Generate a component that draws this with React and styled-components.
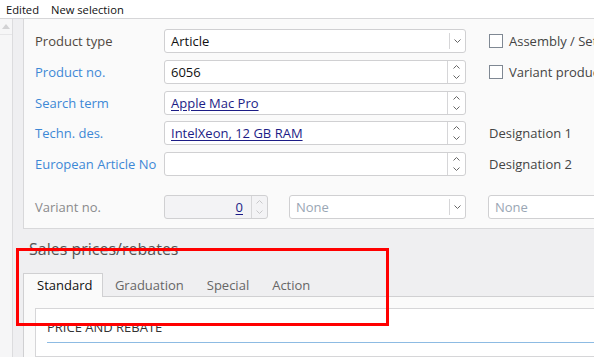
import React from "react";
import styled, { createGlobalStyle } from "styled-components";

const Global = createGlobalStyle`
  html, body { margin: 0; padding: 0; }
  body {
    width: 594px; height: 357px; overflow: hidden;
    font-family: "Open Sans", "Noto Sans", sans-serif;
    background: #efeff1;
  }
  #root { height: 357px; }
`;

const Page = styled.div`
  position: relative;
  width: 594px;
  height: 357px;
  overflow: hidden;
  display: flex;
  flex-direction: column;
`;

const TopBar = styled.div`
  height: 18px;
  background: #fff;
  border-bottom: 1px solid #d6d6d8;
  display: flex;
  align-items: center;
  gap: 12px;
  padding-left: 6px;
  font-size: 11.2px;
  color: #111;
  flex-shrink: 0;
`;

const Body = styled.div`
  flex: 1;
  display: flex;
  min-height: 0;
`;

const Strip = styled.div`
  width: 12px;
  flex-shrink: 0;
  background: #f6f6f7;
  border-right: 1px solid #dcdcde;
`;

const ScrollBtn = styled.div`
  height: 15px;
  border-bottom: 1px solid #e6e6e8;
  display: flex;
  justify-content: center;
  align-items: center;
`;

const Main = styled.div`
  flex: 1;
  padding-left: 10px;
  display: flex;
  flex-direction: column;
  min-width: 0;
`;

const Panel = styled.div`
  background: #fafafa;
  border-left: 1px solid #d8d8da;
  border-bottom: 1px solid #d8d8da;
  padding: 10px 0 9px 11px;
  display: flex;
  flex-direction: column;
  gap: 6.75px;
  width: 700px;
`;

const Row = styled.div`
  display: flex;
  align-items: center;
  height: 24px;
  margin-top: ${(p) => p.$mt || 0}px;
`;

const Label = styled.div`
  width: 129px;
  flex-shrink: 0;
  font-size: 13px;
  color: ${(p) =>
    p.$tone === "blue" ? "#3d88d6" : p.$tone === "muted" ? "#8a8a8c" : "#504840"};
`;

const Field = styled.div`
  width: ${(p) => p.$w}px;
  flex-shrink: 0;
  height: 24px;
  box-sizing: border-box;
  border: 1px solid #d0d0d2;
  border-radius: 3px;
  background: ${(p) => (p.$disabled ? "#f3f3f5" : "#fff")};
  display: flex;
  align-items: stretch;
  margin-left: ${(p) => p.$ml || 0}px;
`;

const Value = styled.div`
  flex: 1;
  display: flex;
  align-items: center;
  justify-content: ${(p) => (p.$right ? "flex-end" : "flex-start")};
  padding: 0 ${(p) => (p.$right ? 8 : 6)}px;
  font-size: 13px;
  color: ${(p) => (p.$placeholder ? "#9aa6b4" : p.$link ? "#1c1c86" : "#111")};
  text-decoration: ${(p) => (p.$link ? "underline" : "none")};
  text-underline-offset: 2px;
  white-space: nowrap;
  overflow: hidden;
`;

const Addon = styled.div`
  width: ${(p) => p.$w}px;
  border-left: 1px solid #d6d6d8;
  margin: ${(p) => (p.$inset ? "3px 0" : "0")};
  display: flex;
  flex-direction: column;
  justify-content: center;
  align-items: center;
  gap: 6px;
`;

const Side = styled.div`
  margin-left: 23px;
  display: flex;
  align-items: center;
  gap: 6px;
  font-size: 13px;
  color: #444;
  white-space: nowrap;
`;

const Check = styled.span`
  width: 14px;
  height: 14px;
  box-sizing: border-box;
  border: 1px solid #7f8893;
  background: #fff;
  display: inline-block;
`;

const Heading = styled.div`
  font-size: 16px;
  color: #555;
  padding: 9px 0 0 6px;
  height: 44px;
  flex-shrink: 0;
  box-sizing: border-box;
  line-height: 22px;
`;

const Tabs = styled.div`
  display: flex;
  height: 24px;
  flex-shrink: 0;
`;

const Tab = styled.div`
  height: 24px;
  box-sizing: border-box;
  display: flex;
  align-items: center;
  padding: 0 ${(p) => (p.$active ? 10 : 10.5)}px 0 ${(p) => (p.$active ? 13 : 10.5)}px;
  font-size: 13px;
  color: ${(p) => (p.$active ? "#111" : "#666")};
  background: ${(p) => (p.$active ? "#fafafa" : "transparent")};
  border: 1px solid ${(p) => (p.$active ? "#d0d0d2" : "transparent")};
  border-bottom: none;
`;

const TabFill = styled.div`
  flex: 1;
  border-bottom: 1px solid #d0d0d2;
`;

const TabBody = styled.div`
  flex: 1;
  background: #fafafa;
  border-left: 1px solid #d0d0d2;
  padding: 11px 0 0 11px;
  display: flex;
`;

const Card = styled.div`
  flex: 1;
  background: #fff;
  border: 1px solid #d6d6d8;
  border-right: none;
  padding: 8px 0 0 11px;
`;

const CardTitle = styled.div`
  font-size: 13px;
  color: #333;
  height: 26px;
  line-height: 20px;
  box-sizing: border-box;
  border-bottom: 1px solid #8dbbe3;
`;

const Highlight = styled.div`
  position: absolute;
  left: 16px;
  top: 248px;
  width: 373px;
  height: 78px;
  box-sizing: border-box;
  border: 3px solid #ff0000;
  pointer-events: none;
`;

const Chevron = ({ up, color = "#666" }) => (
  <svg width="7" height="4" viewBox="0 0 7 4">
    <path
      d={up ? "M0.5 3.5 L3.5 0.5 L6.5 3.5" : "M0.5 0.5 L3.5 3.5 L6.5 0.5"}
      fill="none"
      stroke={color}
      strokeWidth="1"
    />
  </svg>
);

const Spinner = ({ disabled }) => (
  <Addon $w={disabled ? 15 : 17}>
    <Chevron up color={disabled ? "#c8c8ca" : "#666"} />
    <Chevron color={disabled ? "#c8c8ca" : "#666"} />
  </Addon>
);

const Drop = () => (
  <Addon $w={15} $inset>
    <Chevron />
  </Addon>
);

export default function App() {
  return (
    <Page>
      <Global />
      <TopBar>
        <span>Edited</span>
        <span>New selection</span>
      </TopBar>
      <Body>
        <Strip>
          <ScrollBtn>
            <svg width="8" height="5" viewBox="0 0 8 5">
              <path d="M0 5 L4 0 L8 5 Z" fill="#d2d2d4" />
            </svg>
          </ScrollBtn>
        </Strip>
        <Main>
          <Panel>
            <Row>
              <Label>Product type</Label>
              <Field $w={302}>
                <Value>Article</Value>
                <Drop />
              </Field>
              <Side>
                <Check />
                Assembly / Set
              </Side>
            </Row>
            <Row>
              <Label $tone="blue">Product no.</Label>
              <Field $w={302}>
                <Value>6056</Value>
                <Spinner />
              </Field>
              <Side>
                <Check />
                Variant product
              </Side>
            </Row>
            <Row>
              <Label $tone="blue">Search term</Label>
              <Field $w={302}>
                <Value $link>Apple Mac Pro</Value>
                <Spinner />
              </Field>
            </Row>
            <Row>
              <Label $tone="blue">Techn. des.</Label>
              <Field $w={302}>
                <Value $link>IntelXeon, 12 GB RAM</Value>
                <Spinner />
              </Field>
              <Side>Designation 1</Side>
            </Row>
            <Row>
              <Label $tone="blue">European Article No</Label>
              <Field $w={302}>
                <Value />
                <Spinner />
              </Field>
              <Side>Designation 2</Side>
            </Row>
            <Row $mt={12}>
              <Label $tone="muted">Variant no.</Label>
              <Field $w={104} $disabled>
                <Value $right $link>0</Value>
                <Spinner disabled />
              </Field>
              <Field $w={177} $ml={21}>
                <Value $placeholder>None</Value>
                <Drop />
              </Field>
              <Field $w={160} $ml={22}>
                <Value $placeholder>None</Value>
              </Field>
            </Row>
          </Panel>
          <Heading>Sales prices/rebates</Heading>
          <Tabs>
            <Tab $active>Standard</Tab>
            <TabFill>
              <Tabs>
                <Tab>Graduation</Tab>
                <Tab>Special</Tab>
                <Tab>Action</Tab>
              </Tabs>
            </TabFill>
          </Tabs>
          <TabBody>
            <Card>
              <CardTitle>PRICE AND REBATE</CardTitle>
            </Card>
          </TabBody>
        </Main>
      </Body>
      <Highlight />
    </Page>
  );
}
